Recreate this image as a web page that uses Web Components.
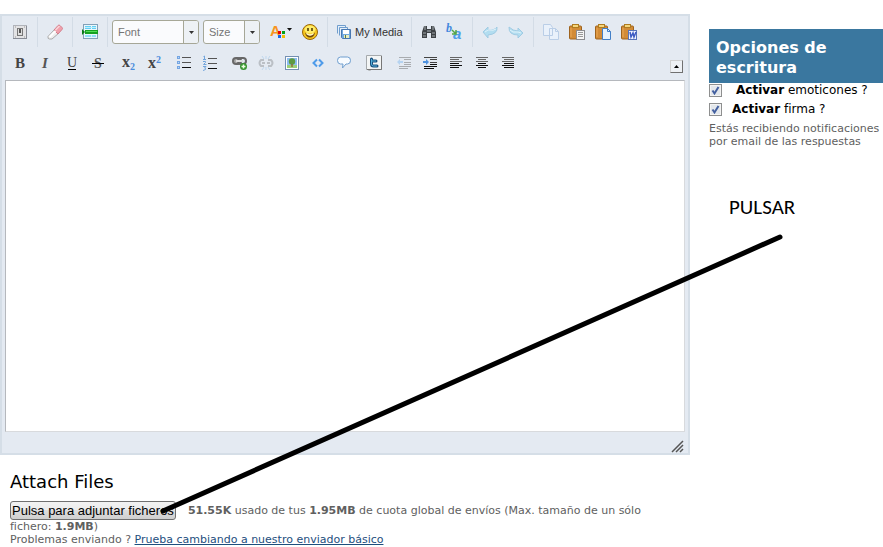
<!DOCTYPE html>
<html lang="es">
<head>
<meta charset="utf-8">
<title>Opciones de escritura</title>
<style>
body { margin: 0; background: #fff; color: #000; font-family: Verdana, "DejaVu Sans", sans-serif; font-size: 11px; line-height: 13px; }
</style>
</head>
<body>
<post-page></post-page>
<script>
const ICONS = {
  source: '<rect x="1.500" y="1.500" width="13" height="13" fill="#e3e3e5" stroke="#b0b3ba"/><path d="M1 14.500h14M14.500 2v13" stroke="#888c96"/><rect x="5" y="4" width="6" height="8" fill="#777"/><rect x="6" y="5" width="4" height="6" fill="#ddd"/><rect x="7" y="5" width="2" height="4" fill="#555"/><path d="M3 3h1M12 3h1M3 13h1M12 13h1" stroke="#999"/>',
  eraser: '<path d="M1 12.500 8 5l4 4-7 6H2.500Q.500 15 1 12.500Z" fill="#eee" stroke="#aaa"/><path d="m7 6 4-4.500Q12 .500 13 1.500l2 2q1 1 0 2L11 10Z" fill="#f0a0ac" stroke="#d47e8c"/><path d="m8.500 6 4-4" stroke="#fbd5d9" stroke-width="1.500"/><path d="m2.500 13 6-6" stroke="#fff" stroke-width="2"/>',
  pagebreak: '<rect x="1.500" y=".500" width="14" height="14" fill="#e9f7fc" stroke="#82a0b7"/><path d="M3 2h6v3H3ZM10 2h4v3h-4ZM3 11h6v2H3ZM10 11h4v2h-4Z" fill="#62d0f5"/><path d="M3 3.500h11M3 12h11" stroke="#bfeefc"/><path d="M3 6h13v4H3Z" fill="#16a122"/><path d="M4 7.500h11" stroke="#4fe055"/><path d="m0 5 3 3-3 3Z" fill="#087b16"/>',
  color: '<text x="-3" y="12" font-family="Liberation Sans, Arial, sans-serif" font-size="15" font-weight="bold" fill="#f79420">A</text><path d="M5 7h3v3H5Z" fill="#e80000"/><path d="M9 7h3v3H9Z" fill="#00a018"/><path d="M5 11h3v3H5Z" fill="#1767e8"/><path d="M9 11h3v3H9Z" fill="#f3bd00"/><path d="M14 4h5l-2.500 3Z" fill="#111"/>',
  smile: '<circle cx="8" cy="8" r="7.500" fill="#f6c51c" stroke="#9b6709"/><ellipse cx="8" cy="5.500" rx="5.500" ry="4" fill="#ffed68"/><path d="M6 4v3M10 4v3" stroke="#553b05" stroke-width="1.600"/><path d="M3 8.500q5 6 10 0-1 5-5 5t-5-5Z" fill="#70460a"/><path d="M4.500 9.500q3.500 3 7 0" fill="none" stroke="#fff7cc" stroke-width="1.300"/>',
  media: '<path d="M1.500 9.500v-8h8v2M3.500 11.500v-8h8v2" fill="#e5f0fb" stroke="#6f9dcd"/><path d="M5.500 5.500h9v9h-8l-1-1Z" fill="#72a9df" stroke="#4878b2"/><path d="M7 6h6v4H7Z" fill="#fff"/><path d="M8 11h5v3H8Z" fill="#e9eec2"/><path d="M9 11h1v3H9Z" fill="#597a42"/>',
  find: '<path d="M3 2h3v3h4V2h3l2 6v6h-5V9H6v5H1V8Z" fill="#3e4246"/><path d="M4 2v4M12 2v4M2 9h3M11 9h3M2 12h3M11 12h3" stroke="#a2a9ad"/><path d="M6 6h4v2H6Z" fill="#767d82"/>',
  replace: '<text x="-1" y="8" font-family="Liberation Serif, serif" font-size="12" font-weight="bold" font-style="italic" fill="#4388dd">b</text><text x="6" y="15" font-family="Liberation Sans, sans-serif" font-size="15" font-weight="bold" font-style="italic" fill="#4f9eea">a</text><path d="m5 6 4 4M9 6v4H5" fill="none" stroke="#55a646" stroke-width="1.500"/>',
  undo: '<path d="M1 8 6 3v3q6 1 9-3 1 7-9 8v3Z" fill="#b2ddf0" stroke="#a0cbe3"/><path d="m3 8 3-2q6 1 8-1" stroke="#dff3fb" fill="none"/>',
  redo: '<path d="m15 9-5-5v3Q5 7 1 3q-.500 8 9 8v3Z" fill="#b2ddf0" stroke="#a0cbe3"/><path d="M2 6q2 3 8 2l3 1" stroke="#dff3fb" fill="none"/>',
  copy: '<path d="M.500.500h7l2 3v8h-9ZM6.500 4.500h6l3 3v8h-9Z" fill="#e9f1fb" stroke="#bacee7"/><path d="M12.500 4.500v3h3" fill="none" stroke="#bacee7"/>',
  paste: '<rect x=".500" y="2" width="12" height="13" rx="1" fill="#d28b37" stroke="#9e631e"/><path d="M2 4v9" stroke="#eba957"/><rect x="3.500" y=".500" width="6" height="3" fill="#f5d57b" stroke="#af7c20"/><rect x="7.500" y="6.500" width="8" height="9" fill="#f5f5f5" stroke="#8c8d91"/><path d="M9 8.500h5M9 10.500h5M9 12.500h5" stroke="#999"/>',
  pastetext: '<rect x=".500" y="2" width="12" height="13" rx="1" fill="#d28b37" stroke="#9e631e"/><path d="M2 4v9" stroke="#eba957"/><rect x="3.500" y=".500" width="6" height="3" fill="#f5d57b" stroke="#af7c20"/><path d="M7.500 4.500h5l3 3v8h-8Z" fill="#e6f2ff" stroke="#427fc7"/><path d="M12.500 4.500v3h3" fill="none" stroke="#427fc7"/>',
  pasteword: '<rect x=".500" y="2" width="12" height="13" rx="1" fill="#d28b37" stroke="#9e631e"/><path d="M2 4v9" stroke="#eba957"/><rect x="3.500" y=".500" width="6" height="3" fill="#f5d57b" stroke="#af7c20"/><rect x="7.500" y="6.500" width="8" height="9" fill="#f0f4ff" stroke="#5774b9"/><path d="m9 8 1 5 2-4 1 4 2-5" fill="none" stroke="#3b5bc3" stroke-width="1.500"/>',
  bullets: '<path d="M6 2.500h9M6 7.500h9" stroke="#555"/><path d="M6 12.500h9" stroke="#111"/><path d="M1 1h3v3H1ZM1 6h3v3H1ZM1 11h3v3H1Z" fill="#74a5e2"/><path d="M2 2h1v1H2ZM2 7h1v1H2ZM2 12h1v1H2Z" fill="#b9d7f8"/>',
  numbers: '<path d="M6 3.500h9M6 8.500h9" stroke="#555"/><path d="M6 13.500h9" stroke="#111"/><path d="m1.500 1.500 1-.500v3.500M1 4.500h3M1 6.500h2.500v1L1.500 9.500h3M1 11.500h3l-1.500 1.500q1.500 0 1 1.500L1 15.500" fill="none" stroke="#72a5dc"/>',
  link: '<rect x="1" y="3" width="8" height="6" rx="3" fill="#aaa" stroke="#686868" stroke-width="2"/><rect x="6" y="3" width="8" height="6" rx="3" fill="none" stroke="#666" stroke-width="2"/><path d="M4 6h7" stroke="#ddd" stroke-width="2"/><circle cx="11.500" cy="11.500" r="3.500" fill="#36932e"/><path d="M11.500 9.500v4M9.500 11.500h4" stroke="#eaffdf" stroke-width="1.500"/>',
  unlink: '<path d="M6 5H3q-3 3 0 6h3M10 5h3q3 3 0 6h-3M4 8h3M9 8h3" fill="none" stroke="#bbc0c6" stroke-width="2"/><path d="m4 1 2 3M12 1l-2 3M4 15l2-3M12 15l-2-3M8 1v3M8 12v3" stroke="#bfd7ee"/>',
  image: '<rect x="1.500" y="1.500" width="13" height="13" fill="#fff" stroke="#7490b2"/><path d="M3 3h10v7H3Z" fill="#8dbdf1"/><path d="M3 10h10v3H3Z" fill="#9bcf78"/><circle cx="8" cy="6.500" r="3.200" fill="#5d9a42"/><path d="M8 9v3" stroke="#916c36" stroke-width="1.500"/>',
  code: '<path d="M7 4.500 3.500 8 7 11.500M9 4.500l3.500 3.500L9 11.500" fill="none" stroke="#4e9bea" stroke-width="2"/>',
  quote: '<path d="M4.500 2h7q3 0 3 3.500t-3 3.500H10l-3.500 4L7 9H4.500q-3 0-3-3.500T4.500 2Z" fill="#f7fbff" stroke="#6e9ecf"/>',
  twitter: '<path d="M.500.500h15v14H5l-1.500 1.500L2 14.500H.500Z" fill="#f3f5f5" stroke="#a5a9ac"/><path d="M1 14.500h14.500V1" fill="none" stroke="#777"/><path d="M5.500 4v5q0 2 2 2H11M5.500 6H10" fill="none" stroke="#174e7d" stroke-width="3" stroke-linecap="round"/><path d="M5.500 4v5q0 2 2 2H11M5.500 6H10" fill="none" stroke="#55b2dc"/>',
  outdent: '<path d="M3 2.500h12M8 4.500h7M8 7.500h7M8 9.500h7M3 11.500h12M3 13.500h9" stroke="#a9acb0"/><path d="m1 7 3-3v2h3v2H4v2Z" fill="#b5d3f1"/>',
  indent: '<path d="M2 2.500h13M8 4.500h7M8 7.500h7" stroke="#444"/><path d="M8 9.500h7M2 11.500h13M2 13.500h10" stroke="#111"/><path d="M7 7 4 4v2H1v2h3v2Z" fill="#4f92df"/>',
  left: '<path d="M2 2.500h12M2 4.500h9M2 6.500h12" stroke="#666"/><path d="M2 8.500h9M2 10.500h12M2 12.500h9" stroke="#111"/>',
  center: '<path d="M2 2.500h12M4 4.500h8M2 6.500h12" stroke="#666"/><path d="M4 8.500h8M2 10.500h12M4 12.500h8" stroke="#111"/>',
  right: '<path d="M2 2.500h12M4 4.500h10M2 6.500h12" stroke="#666"/><path d="M4 8.500h10M2 10.500h12M4 12.500h10" stroke="#111"/>',
  bold: '<text x="3" y="13" font-family="Liberation Serif, serif" font-size="15" font-weight="bold" fill="#444">B</text>',
  italic: '<text x="4" y="13" font-family="Liberation Serif, serif" font-size="15" font-weight="bold" font-style="italic" fill="#555">I</text>',
  underline: '<text x="3" y="12" font-family="Liberation Serif, serif" font-size="14" fill="#444">U</text><path d="M4 14.500h8" stroke="#000"/>',
  strike: '<text x="4" y="13" font-family="Liberation Serif, serif" font-size="14" font-weight="bold" fill="#555">S</text><path d="M2 8.500h12" stroke="#000"/>',
  sub: '<text x="2" y="12" font-family="Liberation Serif, serif" font-size="16" font-weight="bold" fill="#444">x</text><text x="10" y="15" font-family="Liberation Serif, serif" font-size="10" font-weight="bold" fill="#4b8ddd">2</text>',
  sup: '<text x="2" y="13" font-family="Liberation Serif, serif" font-size="16" font-weight="bold" fill="#444">x</text><text x="10" y="8" font-family="Liberation Serif, serif" font-size="10" font-weight="bold" fill="#4b8ddd">2</text>'
};

function define(name, html, setup) {
  const template = document.createElement('template');
  template.innerHTML = html;
  customElements.define(name, class extends HTMLElement {
    constructor() {
      super();
      this.attachShadow({ mode: 'open' }).append(template.content.cloneNode(true));
    }
    connectedCallback() { if (setup) setup(this, this.shadowRoot); }
  });
}

define('tool-button', `
<style>
:host { display: block; flex: none; }
button { display: flex; align-items: center; justify-content: center; gap: 3px; box-sizing: border-box; min-width: 26px; height: 24px; margin: 0; padding: 0; border: 0; background: none; color: #333; font: 11px/16px "Liberation Sans", Arial, sans-serif; }
:host([wide]) button { min-width: 33px; }
:host([text]) button { padding: 0 4px; }
svg { display: block; flex: none; overflow: visible; }
</style>
<button type="button"><svg width="16" height="16" viewBox="0 0 16 16" aria-hidden="true"></svg><slot></slot></button>`,
(el, root) => {
  root.querySelector('svg').innerHTML = ICONS[el.getAttribute('icon')];
  root.querySelector('button').setAttribute('aria-label', el.getAttribute('label'));
});

define('tool-group', `
<style>
:host { display: flex; align-items: center; flex: none; height: 30px; padding-right: 4px; }
:host([divided]) { border-right: 1px solid #d3dce6; margin-right: 4px; }
</style><slot></slot>`);

define('tool-select', `
<style>
:host { display: grid; flex: none; box-sizing: border-box; height: 24px; border: 1px solid #a6a797; border-radius: 3px; overflow: hidden; background: #fafbfd; grid-template-columns: 1fr 15px; }
select { grid-area: 1 / 1 / 2 / 3; min-width: 0; margin: 0; padding: 0 16px 0 5px; border: 0; background: none; appearance: none; color: #757575; font: 11px/20px "Liberation Sans", Arial, sans-serif; }
span { grid-area: 1 / 2; display: grid; place-items: center; border-left: 1px solid #a6a797; background: #edf1f5; pointer-events: none; }
</style>
<select><option></option></select><span><svg width="5" height="3" viewBox="0 0 5 3"><path d="M0 0h5L2.500 3Z" fill="#333"/></svg></span>`,
(el, root) => {
  root.querySelector('option').textContent = el.getAttribute('label');
  root.querySelector('select').setAttribute('aria-label', el.getAttribute('label'));
});

define('rich-editor', `
<style>
:host { display: block; border: 2px solid #d5dee7; padding: 1px 3px 0; background: #e4eaf2; }
.row { display: flex; align-items: center; height: 30px; padding: 0 2px; }
.second { height: 32px; padding-bottom: 1px; }
.font { width: 87px; margin-right: 4px; }
.size { width: 57px; margin-right: 4px; }
.collapse { display: grid; place-items: center; box-sizing: border-box; width: 13px; height: 13px; margin: 7px 0 0 auto; padding: 0; border: 1px solid; border-color: #d0d0d0 #707070 #707070 #d0d0d0; background: #eef1f5; }
textarea { display: block; box-sizing: border-box; width: 100%; height: 352px; margin: 0; padding: 6px; border: 1px solid; border-color: #b5b8bd #d8dadd #d8dadd #b5b8bd; background: #fff; resize: none; outline: 0; }
footer { display: flex; justify-content: flex-end; align-items: flex-end; height: 21px; }
</style>
<div class="row">
  <tool-group divided><tool-button icon="source" label="Código"></tool-button></tool-group>
  <tool-group divided><tool-button icon="eraser" label="Borrar formato"></tool-button></tool-group>
  <tool-group divided><tool-button icon="pagebreak" label="Separador"></tool-button></tool-group>
  <tool-group divided>
    <tool-select class="font" label="Font"></tool-select>
    <tool-select class="size" label="Size"></tool-select>
    <tool-button wide icon="color" label="Color"></tool-button>
    <tool-button icon="smile" label="Emoticones"></tool-button>
  </tool-group>
  <tool-group divided><tool-button text icon="media" label="My Media">My Media</tool-button></tool-group>
  <tool-group divided><tool-button icon="find" label="Buscar"></tool-button><tool-button icon="replace" label="Reemplazar"></tool-button></tool-group>
  <tool-group divided><tool-button icon="undo" label="Deshacer"></tool-button><tool-button icon="redo" label="Rehacer"></tool-button></tool-group>
  <tool-group><tool-button icon="copy" label="Copiar"></tool-button><tool-button icon="paste" label="Pegar"></tool-button><tool-button icon="pastetext" label="Pegar texto"></tool-button><tool-button icon="pasteword" label="Pegar de Word"></tool-button></tool-group>
</div>
<div class="row second">
  <tool-group><tool-button icon="bold" label="Negrita"></tool-button><tool-button icon="italic" label="Cursiva"></tool-button><tool-button icon="underline" label="Subrayado"></tool-button><tool-button icon="strike" label="Tachado"></tool-button></tool-group>
  <tool-group><tool-button icon="sub" label="Subíndice"></tool-button><tool-button icon="sup" label="Superíndice"></tool-button></tool-group>
  <tool-group><tool-button icon="bullets" label="Lista"></tool-button><tool-button icon="numbers" label="Lista numerada"></tool-button></tool-group>
  <tool-group><tool-button icon="link" label="Enlace"></tool-button><tool-button icon="unlink" label="Quitar enlace"></tool-button><tool-button icon="image" label="Imagen"></tool-button><tool-button icon="code" label="Insertar código"></tool-button><tool-button icon="quote" label="Cita"></tool-button></tool-group>
  <tool-group><tool-button icon="twitter" label="Twitter"></tool-button></tool-group>
  <tool-group><tool-button icon="outdent" label="Reducir sangría"></tool-button><tool-button icon="indent" label="Aumentar sangría"></tool-button><tool-button icon="left" label="Izquierda"></tool-button><tool-button icon="center" label="Centrar"></tool-button><tool-button icon="right" label="Derecha"></tool-button></tool-group>
  <button class="collapse" type="button" aria-label="Contraer"><svg width="5" height="3" viewBox="0 0 5 3"><path d="M0 3h5L2.500 0Z" fill="#000"/></svg></button>
</div>
<textarea aria-label="Mensaje"></textarea>
<footer><svg width="14" height="13" viewBox="0 0 14 13" aria-hidden="true"><path d="M1 12 12 1M5 12l7-7M9 12l3-3" stroke="#555" stroke-width="1.500"/></svg></footer>`);

define('attach-files', `
<style>
:host { display: block; padding: 16px 10px 0; color: #606060; }
h2 { margin: 0 0 8px; color: #000; font-size: 18px; line-height: 22px; font-weight: normal; }
p { margin: 0; }
button { box-sizing: border-box; height: 19px; margin: 0 12px 0 0; padding: 0 1px; border: 1px solid #707070; border-radius: 3px; background: linear-gradient(#f2f2f2, #ebebeb 50%, #ddd 50%, #cfcfcf); color: #000; font: 13px/16px "Liberation Sans", Arial, sans-serif; vertical-align: middle; }
a { color: #1d4e7d; }
</style>
<h2>Attach Files</h2>
<p><button type="button">Pulsa para adjuntar ficheros</button><b>51.55K</b> usado de tus <b>1.95MB</b> de cuota global de envíos (Max. tamaño de un sólo fichero: <b>1.9MB</b>)</p>
<p>Problemas enviando ? <a href="#">Prueba cambiando a nuestro enviador básico</a></p>`);

define('option-check', `
<style>
:host { display: block; color: #000; font-size: 12px; line-height: 15px; }
label { display: flex; align-items: center; gap: 10px; }
:host([indent]) label { gap: 14px; }
input { appearance: none; flex: none; box-sizing: border-box; width: 13px; height: 13px; margin: 0; border: 1px solid #8e8f8f; background: #e9ecef; box-shadow: inset 0 0 0 1px #f4f4f4; }
input:checked { background: #e3e7eb url("data:image/svg+xml,%3Csvg xmlns='http://www.w3.org/2000/svg' viewBox='0 0 11 11'%3E%3Cpath d='M2.500 5.500 4.500 8.500 8.500 2' fill='none' stroke='%23435f9f' stroke-width='2'/%3E%3C/svg%3E"); }
</style>
<label><input type="checkbox" checked><span><slot></slot></span></label>`);

define('writing-options', `
<style>
:host { display: block; color: #606060; }
h3 { margin: 0; padding: 9px 7px 5px; background: #3a779f; color: #fff; font-size: 16px; line-height: 20px; }
.checks { display: grid; gap: 4px; margin-bottom: 5px; }
p { margin: 0; }
.note { margin-top: 48px; padding-left: 20px; color: #000; font: 21px/22px Calibri, Carlito, Lato, sans-serif; }
</style>
<h3>Opciones de escritura</h3>
<div class="checks">
<option-check indent><b>Activar</b> emoticones ?</option-check>
<option-check><b>Activar</b> firma ?</option-check>
</div>
<p>Estás recibiendo notificaciones por email de las respuestas</p>
<p class="note">PULSAR</p>`);

define('pointer-line', `
<style>
:host { position: absolute; left: 0; top: 0; pointer-events: none; }
svg { display: block; }
</style>
<svg width="800" height="530" viewBox="0 0 800 530" aria-hidden="true"><path d="M163 511 780 237" stroke="#000" stroke-width="5" stroke-linecap="round"/></svg>`);

define('post-page', `
<style>
:host { display: grid; grid-template-columns: minmax(0, 1fr) 174px; column-gap: 19px; align-items: start; padding-top: 14px; position: relative; }
writing-options { margin-top: 15px; }
</style>
<main><rich-editor></rich-editor><attach-files></attach-files></main>
<writing-options></writing-options>
<pointer-line></pointer-line>`);
</script>
</body>
</html>
